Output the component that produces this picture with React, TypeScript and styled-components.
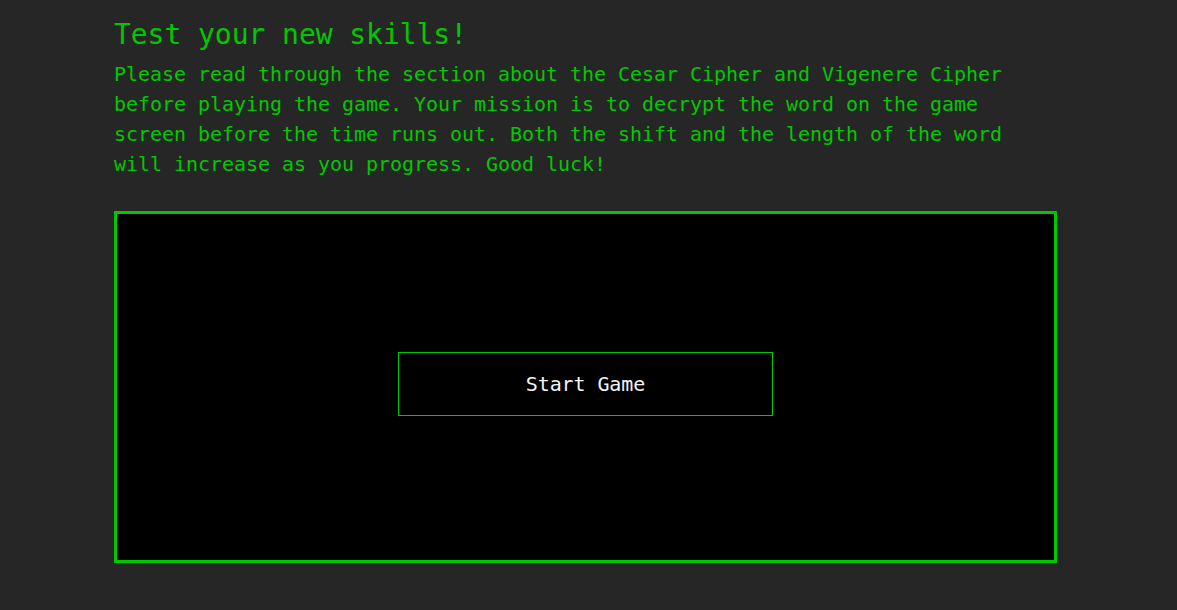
import * as React from "react";
import styled, { createGlobalStyle } from "styled-components";

const GREEN = "#00c800";

const GlobalStyle = createGlobalStyle`
  html, body {
    margin: 0;
    padding: 0;
    background: #262626;
  }
  body {
    font-family: "DejaVu Sans Mono", "Liberation Mono", monospace;
    min-height: 610px;
  }
`;

const Page = styled.main`
  padding: 0 0 0 114px;
  width: 943px;
`;

const Title = styled.h1`
  margin: 18px 0 7px;
  font-size: 28px;
  line-height: 34px;
  font-weight: normal;
  letter-spacing: -0.05px;
  color: ${GREEN};
`;

const Intro = styled.p`
  margin: 0;
  font-size: 20px;
  line-height: 30px;
  letter-spacing: -0.04px;
  color: ${GREEN};
`;

const GameScreen = styled.section`
  box-sizing: border-box;
  margin-top: 32px;
  height: 352px;
  border: 3px solid ${GREEN};
  background: #000;
  display: flex;
  align-items: center;
  justify-content: center;
  padding-bottom: 6px;
`;

const StartButton = styled.button`
  box-sizing: border-box;
  width: 375px;
  height: 64px;
  background: #000;
  border: 1px solid ${GREEN};
  color: #f4f4f4;
  font-family: inherit;
  font-size: 20px;
  letter-spacing: -0.1px;
  cursor: pointer;
`;

export default function App() {
  return (
    <>
      <GlobalStyle />
      <Page>
        <Title>Test your new skills!</Title>
        <Intro>
          Please read through the section about the Cesar Cipher and Vigenere
          Cipher before playing the game. Your mission is to decrypt the word on
          the game screen before the time runs out. Both the shift and the
          length of the word will increase as you progress. Good luck!
        </Intro>
        <GameScreen>
          <StartButton>Start Game</StartButton>
        </GameScreen>
      </Page>
    </>
  );
}
